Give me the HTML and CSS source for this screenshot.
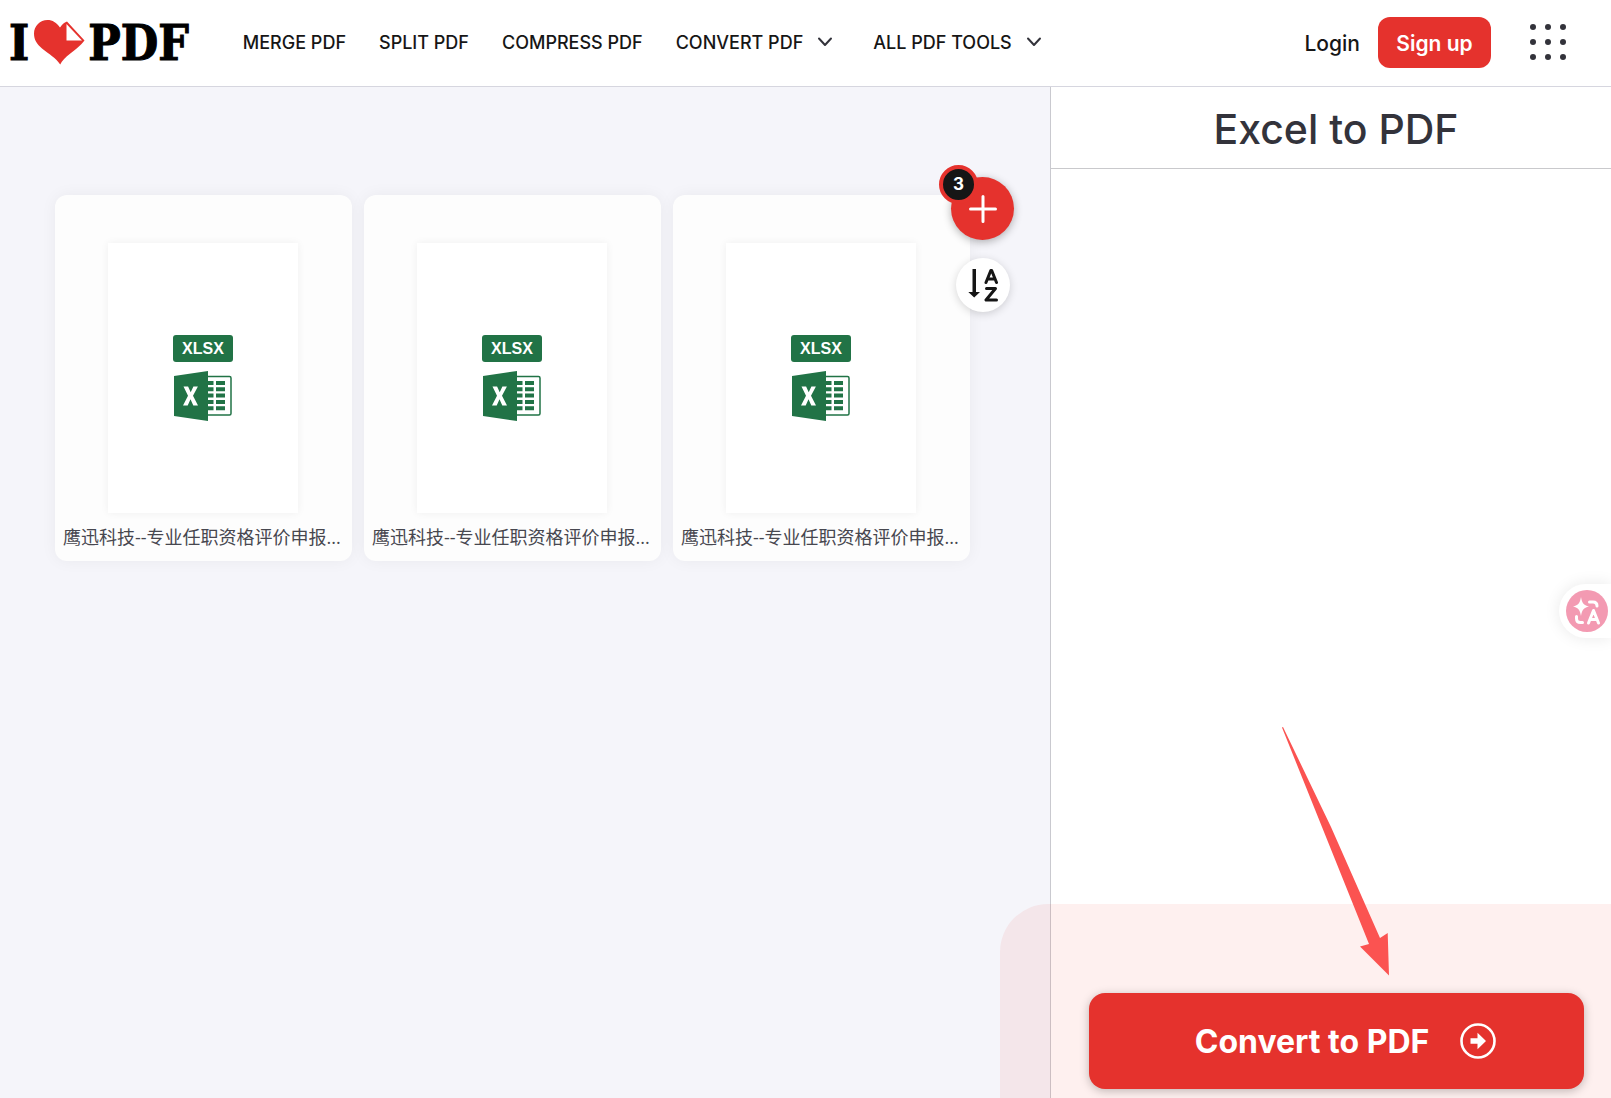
FILE: index.html
```html
<!DOCTYPE html>
<html lang="en">
<head>
<meta charset="utf-8">
<meta name="viewport" content="width=device-width, initial-scale=1">
<title>Excel to PDF</title>
<link rel="stylesheet" href="styles.css">
</head>
<body>
<svg class="sprite" aria-hidden="true">
  <symbol id="excel" viewBox="0 0 58 50">
    <path fill="#217346" d="M0 5 34 0v50L0 45z"/>
    <path fill="none" stroke="#217346" stroke-width="1.5" d="M34 5.5h21.5a1.5 1.5 0 0 1 1.500 1.500v35.500a1.500 1.500 0 0 1-1.500 1.500H34"/>
    <path fill="#217346" d="M34 10h5.500v4H34zM34 16.300h5.500v4H34zM34 22.600h5.500v4H34zM34 29h5.500v4H34zM34 35.300h5.500v4H34zM42 10h9v4h-9zM42 16.300h9v4h-9zM42 22.600h9v4h-9zM42 29h9v4h-9zM42 35.300h9v4h-9z"/>
    <path fill="#fff" d="M9.500 15.500h4.600l2.600 5.800 2.700-5.800h4.500L19 24.800l5 9.700h-4.700l-2.800-6.200-2.800 6.200H9l5-9.700z"/>
  </symbol>
  <symbol id="chevron" viewBox="0 0 16 10">
    <path fill="none" stroke="#33333b" stroke-width="2" stroke-linecap="round" stroke-linejoin="round" d="m2 1.500 6 6.500 6-6.500"/>
  </symbol>
</svg>

<header class="header">
  <a class="logo" href="#" aria-label="I love PDF">
    <span>I</span>
    <svg class="logo-heart" viewBox="0 0 51 45" aria-hidden="true">
      <path fill="#e5322d" d="M26 7.500C22.500 2.500 18.500 0 13.500 0 6 0 0 6 0 13.500 0 20 3 24 8 28.500 15 34 22 38 26.200 44.500 29.500 37 42 30 47.500 24l3-3.500L33 1.500c-3 1-5 3-7 6z"/>
      <path fill="#fff" d="M32.500 4v16.500H48z"/>
    </svg>
    <span>PDF</span>
  </a>
  <nav class="nav">
    <a href="#">MERGE PDF</a>
    <a href="#">SPLIT PDF</a>
    <a href="#">COMPRESS PDF</a>
    <a href="#">CONVERT PDF <svg class="chevron" aria-hidden="true"><use href="#chevron"/></svg></a>
    <a href="#">ALL PDF TOOLS <svg class="chevron" aria-hidden="true"><use href="#chevron"/></svg></a>
  </nav>
  <div class="account">
    <a class="login" href="#">Login</a>
    <button class="signup" type="button">Sign up</button>
    <button class="apps" type="button" aria-label="More products">
      <svg viewBox="0 0 36 36" fill="#33333b" aria-hidden="true">
        <circle cx="3" cy="3" r="3"/><circle cx="18" cy="3" r="3"/><circle cx="33" cy="3" r="3"/>
        <circle cx="3" cy="18" r="3"/><circle cx="18" cy="18" r="3"/><circle cx="33" cy="18" r="3"/>
        <circle cx="3" cy="33" r="3"/><circle cx="18" cy="33" r="3"/><circle cx="33" cy="33" r="3"/>
      </svg>
    </button>
  </div>
</header>

<main class="tool">
  <section class="workspace" aria-label="Files">
    <ul class="files">
      <li class="file">
        <div class="page"><span class="type">XLSX</span><svg class="excel" aria-hidden="true"><use href="#excel"/></svg></div>
        <span class="name">鹰迅科技--专业任职资格评价申报...</span>
      </li>
      <li class="file">
        <div class="page"><span class="type">XLSX</span><svg class="excel" aria-hidden="true"><use href="#excel"/></svg></div>
        <span class="name">鹰迅科技--专业任职资格评价申报...</span>
      </li>
      <li class="file">
        <div class="page"><span class="type">XLSX</span><svg class="excel" aria-hidden="true"><use href="#excel"/></svg></div>
        <span class="name">鹰迅科技--专业任职资格评价申报...</span>
      </li>
    </ul>
    <div class="actions">
      <button class="add" type="button" aria-label="Add more files">
        <svg viewBox="0 0 28 28" fill="none" stroke="#fff" stroke-width="3" stroke-linecap="round" aria-hidden="true"><path d="M14 1.500v25M1.500 14h25"/></svg>
        <span class="count">3</span>
      </button>
      <button class="sort" type="button" aria-label="Sort files by name">
        <svg viewBox="0 0 30 34" aria-hidden="true">
          <path fill="#161616" d="M4.500 1h3.500v23h4l-5.800 5.500L.300 24h4.200z"/>
          <path fill="none" stroke="#161616" stroke-width="3" stroke-linecap="round" stroke-linejoin="round" d="M18 14.500 22.800 2.500h.9l4.800 12M19.500 11h7.500M18.500 20.500h9L18 32h10.500"/>
        </svg>
      </button>
    </div>
  </section>

  <aside class="sidebar">
    <h1 class="title">Excel to PDF</h1>
    <div class="footer">
      <button class="convert" type="button">
        Convert to PDF
        <svg viewBox="0 0 36 36" aria-hidden="true">
          <circle cx="18" cy="18" r="16.500" fill="none" stroke="#fff" stroke-width="2.600"/>
          <path fill="#fff" d="M10.500 15.200h7v-5.400L26 18l-8.500 8.200v-5.400h-7z"/>
        </svg>
      </button>
    </div>
    <div class="highlight"></div>
    <svg class="arrow" viewBox="0 0 108 249" aria-hidden="true">
      <path fill="#fb5351" d="M0 .500 1 0 49 100 98 211l7.700-5 1.300 42.500L78 219.500l9-2.500L40 100z"/>
    </svg>
  </aside>
</main>

<button class="translate" type="button" aria-label="Translate page">
  <svg viewBox="0 0 42 42" aria-hidden="true">
    <circle cx="21" cy="21" r="21" fill="#f39ab2"/>
    <path fill="#fff" d="M15 7c1 6 2.500 8 8 9.500-5.500 1.500-7 3.500-8 9.500-1-6-2.500-8-8-9.500C12.500 15 14 13 15 7z"/>
    <g fill="none" stroke="#fff" stroke-width="3" stroke-linecap="round" stroke-linejoin="round">
      <path d="M23.500 12h3.500q4 0 4 4M10.500 26.500v2q0 4 4 4h2M22.500 33l5-12.500 5 12.500M24.500 29.500h6"/>
    </g>
  </svg>
</button>
</body>
</html>
```
FILE: styles.css
```css
* {
  box-sizing: border-box;
}

body {
  margin: 0;
  min-height: 100vh;
  display: flex;
  flex-direction: column;
  overflow-x: hidden;
  font-family: Inter, "Noto Sans CJK SC", sans-serif;
  color: #161616;
  background: #fff;
}

button {
  padding: 0;
  border: 0;
  font: inherit;
  cursor: pointer;
}

a {
  color: inherit;
  text-decoration: none;
}

svg {
  display: block;
}

.sprite {
  position: absolute;
  width: 0;
  height: 0;
}

/* Header */

.header {
  display: flex;
  align-items: center;
  height: 87px;
  padding: 0 45px 2px 9px;
  border-bottom: 1px solid #d6d6df;
}

.logo {
  display: flex;
  align-items: center;
  padding-top: 1px;
  font: bold 48px/56px "DejaVu Serif Condensed", "DejaVu Serif", serif;
  color: #000;
  -webkit-text-stroke: 1px #000;
}

.logo-heart {
  width: 51px;
  height: 45px;
  margin: 0 3px 0 5px;
}

.nav {
  display: flex;
  gap: 33px;
  margin-left: 54px;
  font-size: 18px;
  font-weight: 500;
  white-space: nowrap;
}

.nav a {
  display: flex;
  align-items: center;
  gap: 14px;
}

.chevron {
  width: 16px;
  height: 10px;
  margin-right: 7px;
}

.account {
  display: flex;
  align-items: center;
  gap: 18px;
  margin-left: auto;
}

.login {
  padding-top: 2px;
  font-size: 21px;
  font-weight: 500;
}

.signup {
  width: 113px;
  height: 51px;
  padding-top: 2px;
  border-radius: 12px;
  background: #e5322d;
  color: #fff;
  font-size: 21px;
  font-weight: 600;
}

.apps {
  margin-left: 21px;
  background: none;
}

.apps svg {
  width: 36px;
  height: 36px;
}

/* Tool */

.tool {
  flex: 1;
  display: grid;
  grid-template-columns: minmax(0, 1fr) 561px;
}

.workspace {
  position: relative;
  padding: 108px 80px 40px 55px;
  background: #f5f5fa;
}

.files {
  display: flex;
  flex-wrap: wrap;
  gap: 12px;
  margin: 0;
  padding: 0;
  list-style: none;
}

.file {
  display: flex;
  flex-direction: column;
  align-items: center;
  gap: 11px;
  width: 297px;
  height: 366px;
  padding: 48px 9px 8px 8px;
  border-radius: 12px;
  background: #fdfdfd;
  box-shadow: 0 0 16px rgba(0, 0, 0, 0.05);
}

.page {
  display: flex;
  flex-direction: column;
  align-items: center;
  justify-content: center;
  gap: 9px;
  width: 190px;
  height: 270px;
  background: #fff;
  box-shadow: 0 0 8px rgba(0, 0, 0, 0.06);
}

.type {
  width: 60px;
  border-radius: 3px;
  background: #217346;
  color: #fff;
  font: bold 16px/27px "Liberation Sans", sans-serif;
  text-align: center;
}

.excel {
  width: 58px;
  height: 50px;
}

.name {
  width: 100%;
  font: 18px/26px "Open Sans", "Noto Sans CJK SC", sans-serif;
  color: #47474f;
  white-space: nowrap;
}

.actions {
  position: absolute;
  top: 90px;
  right: 36px;
  display: flex;
  flex-direction: column;
  align-items: center;
  gap: 18px;
}

.add,
.sort {
  display: flex;
  align-items: center;
  justify-content: center;
  border-radius: 50%;
  box-shadow: 0 2px 8px rgba(0, 0, 0, 0.3);
}

.add {
  position: relative;
  width: 63px;
  height: 63px;
  background: #e5322d;
}

.add svg {
  width: 28px;
  height: 28px;
}

.count {
  position: absolute;
  top: -12px;
  left: -12px;
  width: 39px;
  height: 39px;
  border: 4px solid #e5322d;
  border-radius: 50%;
  background: #161616;
  color: #fff;
  font-size: 17px;
  font-weight: 700;
  line-height: 31px;
}

.sort {
  width: 54px;
  height: 54px;
  background: #fff;
  box-shadow: 0 2px 8px rgba(0, 0, 0, 0.16);
}

.sort svg {
  width: 30px;
  height: 34px;
}

/* Sidebar */

.sidebar {
  position: relative;
  display: flex;
  flex-direction: column;
  justify-content: space-between;
  border-left: 1px solid #c9c9cf;
}

.title {
  margin: 0;
  padding: 17px 0 14px 10px;
  border-bottom: 1px solid #c9c9cc;
  color: #33333b;
  font-size: 41px;
  font-weight: 500;
  line-height: 50px;
  text-align: center;
}

.footer {
  position: relative;
  z-index: 1;
  padding: 0 27px 9px 38px;
}

.convert {
  display: flex;
  align-items: center;
  justify-content: center;
  gap: 31px;
  width: 100%;
  height: 96px;
  padding-left: 18px;
  border-radius: 16px;
  background: #e5322d;
  color: #fff;
  font-size: 32px;
  font-weight: 700;
  box-shadow: 0 2px 10px rgba(0, 0, 0, 0.25);
}

.convert svg {
  width: 36px;
  height: 36px;
}

.highlight {
  position: absolute;
  right: 0;
  bottom: 0;
  left: -51px;
  height: 194px;
  border-top-left-radius: 48px;
  background: rgba(248, 60, 45, 0.08);
}

.arrow {
  position: absolute;
  right: 221px;
  bottom: 122px;
  width: 108px;
  height: 249px;
}

/* Floating translate control */

.translate {
  position: fixed;
  top: 584px;
  right: 0;
  width: 52px;
  height: 54px;
  padding-left: 7px;
  border-radius: 27px 0 0 27px;
  background: #fff;
  box-shadow: 0 0 16px rgba(0, 0, 0, 0.09);
}

.translate svg {
  width: 42px;
  height: 42px;
}
```
